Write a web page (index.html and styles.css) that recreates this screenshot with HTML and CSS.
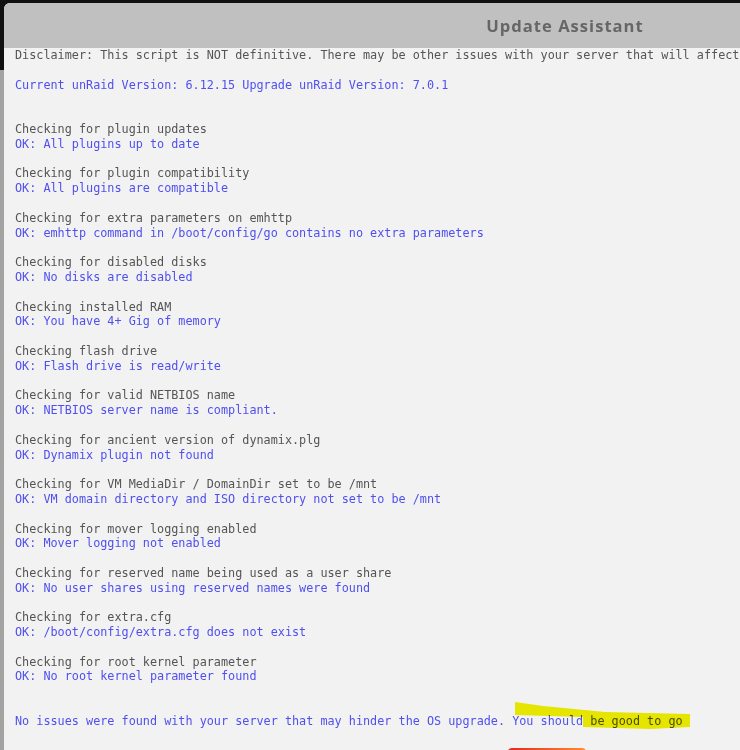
FILE: index.html
```html
<!DOCTYPE html>
<html lang="en">
<head>
<meta charset="UTF-8" />
<meta name="viewport" content="width=device-width, initial-scale=1" />
<title>Update Assistant</title>
<link rel="stylesheet" href="styles.css">
</head>
<body>
<div class="backdrop">
  <div class="dialog">
    <div class="dialog-title">Update Assistant</div>
    <div class="output">
      <div class="line">Disclaimer: This script is NOT definitive. There may be other issues with your server that will affect the upgrade.</div>
      <div class="gap"></div>
      <div class="line ok">Current unRaid Version: 6.12.15 Upgrade unRaid Version: 7.0.1</div>
      <div class="gap"></div>
      <div class="gap"></div>

      <div class="check">
        <div class="line">Checking for plugin updates</div>
        <div class="line ok">OK: All plugins up to date</div>
      </div>
      <div class="check">
        <div class="line">Checking for plugin compatibility</div>
        <div class="line ok">OK: All plugins are compatible</div>
      </div>
      <div class="check">
        <div class="line">Checking for extra parameters on emhttp</div>
        <div class="line ok">OK: emhttp command in /boot/config/go contains no extra parameters</div>
      </div>
      <div class="check">
        <div class="line">Checking for disabled disks</div>
        <div class="line ok">OK: No disks are disabled</div>
      </div>
      <div class="check">
        <div class="line">Checking installed RAM</div>
        <div class="line ok">OK: You have 4+ Gig of memory</div>
      </div>
      <div class="check">
        <div class="line">Checking flash drive</div>
        <div class="line ok">OK: Flash drive is read/write</div>
      </div>
      <div class="check">
        <div class="line">Checking for valid NETBIOS name</div>
        <div class="line ok">OK: NETBIOS server name is compliant.</div>
      </div>
      <div class="check">
        <div class="line">Checking for ancient version of dynamix.plg</div>
        <div class="line ok">OK: Dynamix plugin not found</div>
      </div>
      <div class="check">
        <div class="line">Checking for VM MediaDir / DomainDir set to be /mnt</div>
        <div class="line ok">OK: VM domain directory and ISO directory not set to be /mnt</div>
      </div>
      <div class="check">
        <div class="line">Checking for mover logging enabled</div>
        <div class="line ok">OK: Mover logging not enabled</div>
      </div>
      <div class="check">
        <div class="line">Checking for reserved name being used as a user share</div>
        <div class="line ok">OK: No user shares using reserved names were found</div>
      </div>
      <div class="check">
        <div class="line">Checking for extra.cfg</div>
        <div class="line ok">OK: /boot/config/extra.cfg does not exist</div>
      </div>
      <div class="check">
        <div class="line">Checking for root kernel parameter</div>
        <div class="line ok">OK: No root kernel parameter found</div>
      </div>
      <div class="gap"></div>

      <div class="line ok summary">No issues were found with your server that may hinder the OS upgrade. You should be good to go<svg class="marker" width="180" height="30" viewBox="0 0 180 30"><polygon points="0,0 28,4 90,10 175,12 175,25 135,27 68,25 68,15 0,13" fill="#f2f200" /></svg></div>
      <div class="buttons">
        <button class="btn">Close</button>
      </div>
    </div>
  </div>
</div>
</body>
</html>
```
FILE: styles.css
```css
:root {
  --page-bg: #a3a3a3;
  --title-bg: #c0c0c0;
  --body-bg: #f2f2f2;
  --text: #555;
  --ok: #5050f0;
  --line: 14.8px;
}
body {
  margin: 0;
  overflow: hidden;
  height: 100vh;
  background: linear-gradient(#111 0, #111 70px, var(--page-bg) 70px);
}
.backdrop {
  padding: 3px 0 0 4px;
  background: linear-gradient(#111 0, #111 3px, transparent 3px);
}
.dialog {
  width: 1122px;
  background: var(--body-bg);
  border-radius: 6px 6px 0 0;
  overflow: hidden;
}
.dialog-title {
  height: 45px;
  line-height: 45px;
  background: var(--title-bg);
  text-align: center;
  font-family: "Open Sans", sans-serif;
  font-weight: 700;
  font-size: 16.6px;
  letter-spacing: 1px;
  color: #666;
}
.output {
  padding: 0 0 0 11px;
  font-family: "DejaVu Sans Mono", monospace;
  font-size: 11.8px;
  line-height: var(--line);
  color: var(--text);
}
.line {
  white-space: pre;
}
.ok {
  color: var(--ok);
}
.gap {
  height: var(--line);
}
.check {
  margin-bottom: var(--line);
}
.summary {
  position: relative;
}
/* highlighter stroke drawn over the last sentence */
.marker {
  position: absolute;
  left: 500px;
  top: -12px;
  mix-blend-mode: multiply;
}
.buttons {
  display: flex;
  padding: 19px 0 0 493px;
}
.btn {
  width: 78px;
  height: 30px;
  border: none;
  border-radius: 4px;
  background: linear-gradient(90deg, #e22828 0, #ff8c2f);
  color: #fff;
  font-family: "Open Sans", sans-serif;
  font-size: 12px;
}
```
